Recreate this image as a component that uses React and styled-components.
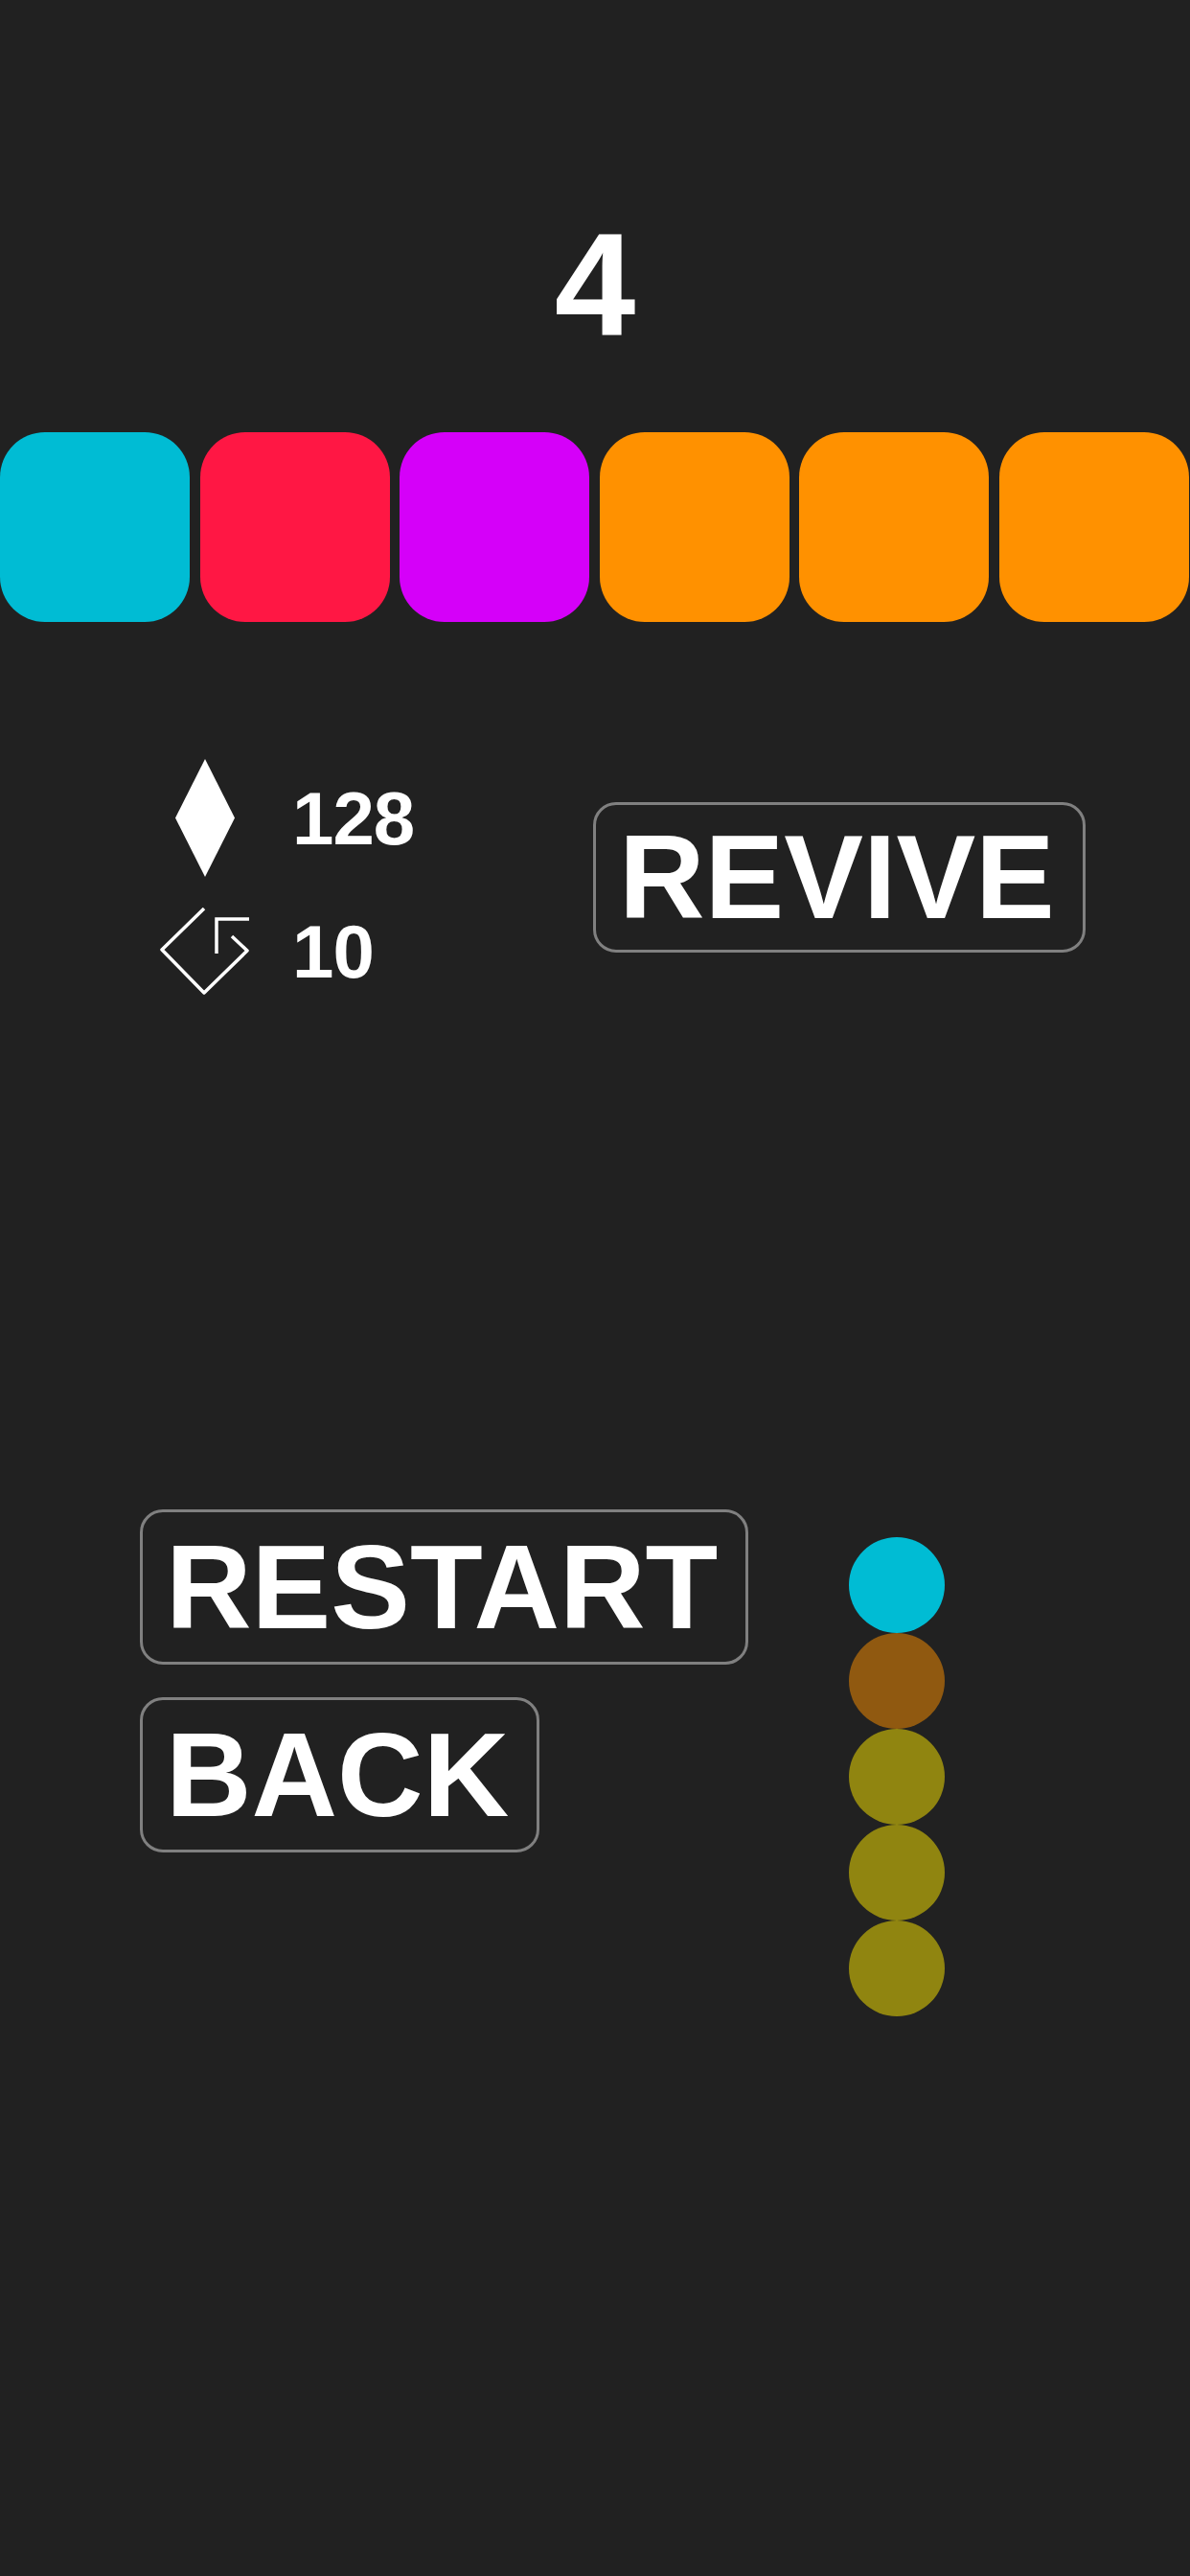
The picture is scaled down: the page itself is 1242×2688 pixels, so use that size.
import React from "react";
import styled, { createGlobalStyle } from "styled-components";

const GlobalStyle = createGlobalStyle`
  html, body {
    margin: 0;
    padding: 0;
    background: #212121;
  }
`;

const tiles = ["#00bcd4", "#ff1744", "#d500f9", "#ff9100", "#ff9100", "#ff9100"];
const snake = ["#00bcd4", "#905910", "#908510", "#908510", "#908510"];

const DiamondIcon = () => (
  <svg width="62" height="123" viewBox="0 0 62 123">
    <polygon points="31,0 62,61.5 31,123 0,61.5" fill="#fff" />
  </svg>
);

const LivesIcon = () => (
  <svg width="94" height="91" viewBox="0 0 94 91" fill="none" stroke="#fff" strokeWidth="3.5">
    <path d="M46 1 L2 44 L46 89 L91 45 L75 30" strokeLinejoin="round" />
    <path d="M93 12 H59 V48" />
  </svg>
);

const App = () => {
  return (
    <>
      <GlobalStyle />
      <Page>
        <Score>4</Score>
        <TileRow>
          {tiles.map((color, index) => (
            <Tile key={index} color={color} />
          ))}
        </TileRow>
        <Middle>
          <Stats>
            <Stat>
              <IconCell>
                <DiamondIcon />
              </IconCell>
              <StatValue>128</StatValue>
            </Stat>
            <Stat>
              <IconCell>
                <LivesIcon />
              </IconCell>
              <StatValue>10</StatValue>
            </Stat>
          </Stats>
          <ActionButton>REVIVE</ActionButton>
        </Middle>
        <Lower>
          <Buttons>
            <ActionButton tall>RESTART</ActionButton>
            <ActionButton tall>BACK</ActionButton>
          </Buttons>
          <Snake>
            {snake.map((color, index) => (
              <Ball key={index} color={color} />
            ))}
          </Snake>
        </Lower>
      </Page>
    </>
  );
};

const Page = styled.div`
  width: 1242px;
  height: 2688px;
  overflow: hidden;
  background: #212121;
  font-family: "Liberation Sans", Arial, sans-serif;
  font-weight: 700;
  color: #fff;
`;
const Score = styled.div`
  height: 451px;
  box-sizing: border-box;
  padding-top: 220px;
  text-align: center;
  font-size: 152px;
  line-height: 152px;
`;
const TileRow = styled.div`
  display: flex;
  gap: 10.5px;
`;
const Tile = styled.div`
  width: 198px;
  height: 198px;
  flex: none;
  border-radius: 47px;
  background: ${(props) => props.color};
`;
const Middle = styled.div`
  display: flex;
  align-items: center;
  margin-top: 143px;
  padding-left: 167px;
`;
const Stats = styled.div`
  width: 452px;
  display: flex;
  flex-direction: column;
  gap: 32px;
`;
const Stat = styled.div`
  display: flex;
  align-items: center;
  gap: 44px;
`;
const IconCell = styled.div`
  width: 94px;
  display: flex;
  justify-content: center;
`;
const StatValue = styled.span`
  font-size: 78px;
  line-height: 78px;
  letter-spacing: -1px;
`;
const ActionButton = styled.div`
  box-sizing: border-box;
  height: ${(props) => (props.tall ? "162px" : "157px")};
  display: flex;
  align-items: center;
  padding: 0 29px 0 24px;
  border: 3px solid #808080;
  border-radius: 24px;
  font-size: 124px;
  line-height: 124px;
  white-space: nowrap;
`;
const Lower = styled.div`
  display: flex;
  align-items: flex-start;
  margin-top: 537px;
  padding-left: 146px;
`;
const Buttons = styled.div`
  display: flex;
  flex-direction: column;
  align-items: flex-start;
  gap: 34px;
  width: 740px;
`;
const Snake = styled.div`
  display: flex;
  flex-direction: column;
  padding-top: 29px;
`;
const Ball = styled.div`
  width: 100px;
  height: 100px;
  border-radius: 50%;
  background: ${(props) => props.color};
`;

export default App;
